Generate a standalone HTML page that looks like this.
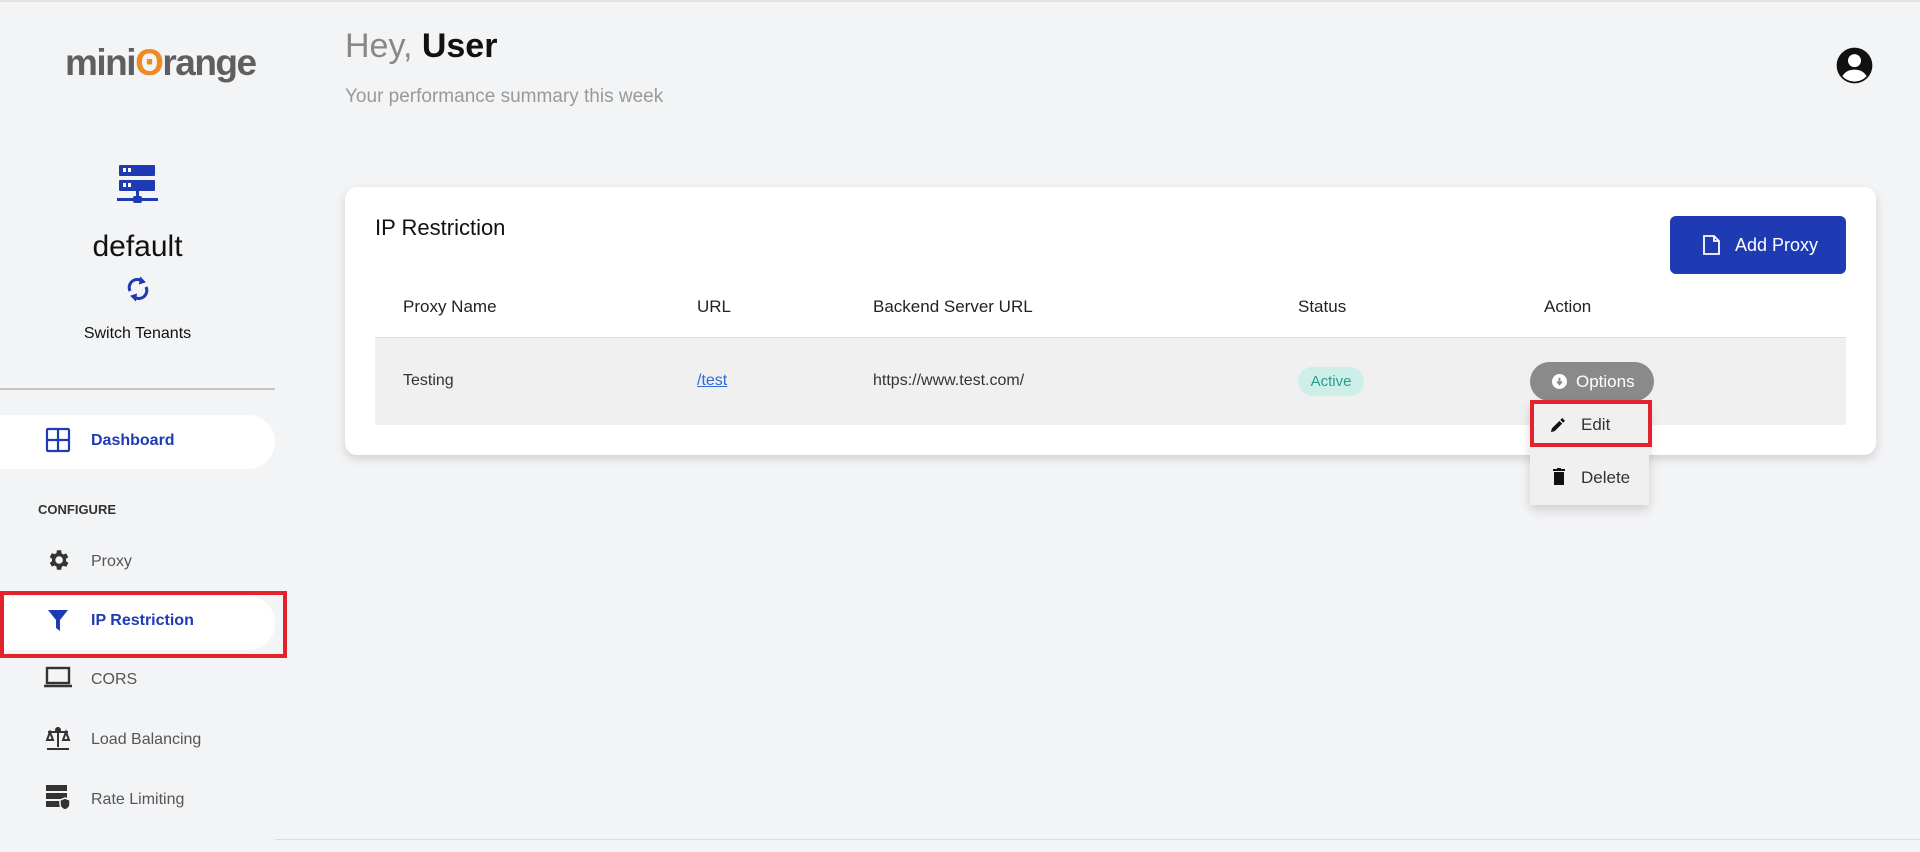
<!DOCTYPE html>
<html><head><meta charset="utf-8"><style>
*{box-sizing:border-box;margin:0;padding:0}
body{width:1920px;height:852px;background:#f3f4f6;font-family:"Liberation Sans",sans-serif;position:relative;overflow:hidden;border-top:2px solid #e2e2e2}
.abs{position:absolute}
.nav{position:absolute;left:45px;width:26px;height:26px}
.nt{position:absolute;left:91px;font-size:16px;color:#555}
.th{position:absolute;top:295px;font-size:17px;color:#222}
.td{position:absolute;top:370px;font-size:16px;color:#333}
</style></head><body>
<!-- logo -->
<div class="abs" style="left:65px;top:40px;font-size:37px;font-weight:bold;color:#5f5f5f;letter-spacing:-1.5px">mini<span style="color:#f08a24">ʘ</span>range</div>
<!-- server icon -->
<svg class="abs" style="left:117px;top:163px" width="42" height="42" viewBox="0 0 42 42"><rect x="2" y="0" width="36" height="11" rx="1" fill="#1f3bb3"/><rect x="2" y="15" width="36" height="11" rx="1" fill="#1f3bb3"/><rect x="6" y="3" width="3" height="4" fill="#fff"/><rect x="11" y="3" width="3" height="4" fill="#fff"/><rect x="6" y="18" width="3" height="4" fill="#fff"/><rect x="11" y="18" width="3" height="4" fill="#fff"/><rect x="19" y="26" width="3" height="8" fill="#1f3bb3"/><rect x="0" y="33" width="41" height="3" fill="#1f3bb3"/><rect x="16" y="31" width="9" height="7" rx="2" fill="#1f3bb3"/></svg>
<div class="abs" style="left:0;width:275px;text-align:center;top:228px;font-size:30px;color:#111">default</div>
<svg class="abs" style="left:126px;top:273px" width="24" height="28" viewBox="0 0 24 28" fill="none" stroke="#1f3bb3" stroke-width="3"><path d="M4 16A8 8 0 0 1 17 7"/><path d="M20 12A8 8 0 0 1 7 21"/><path d="M14 2l5 5-6 2" fill="#1f3bb3" stroke-width="1"/><path d="M10 26l-5-5 6-2" fill="#1f3bb3" stroke-width="1"/></svg>
<div class="abs" style="left:0;width:275px;text-align:center;top:323px;font-size:16px;color:#111">Switch Tenants</div>
<div class="abs" style="left:0;top:386px;width:275px;height:2px;background:#c4c4c4"></div>
<!-- dashboard -->
<div class="abs" style="left:0;top:413px;width:275px;height:54px;background:#fff;border-radius:0 27px 27px 0"></div>
<svg class="nav" style="top:425px" viewBox="0 0 26 26" fill="none" stroke="#1f3bb3" stroke-width="2.2"><rect x="2" y="2" width="22" height="22" rx="1"/><path d="M13 2v22M2 13h22"/></svg>
<div class="nt" style="top:430px;color:#1f3bb3;font-weight:bold">Dashboard</div>
<div class="abs" style="left:38px;top:500px;font-size:13px;font-weight:bold;color:#333">CONFIGURE</div>
<svg class="nav" style="top:545px" viewBox="0 0 24 24"><path fill="#333" d="M19.4 13a7.5 7.5 0 0 0 0-2l2.1-1.6-2-3.5-2.5 1a7 7 0 0 0-1.7-1L15 3h-4l-.4 2.7a7 7 0 0 0-1.7 1l-2.5-1-2 3.5L6.5 11a7.5 7.5 0 0 0 0 2l-2.1 1.6 2 3.5 2.5-1a7 7 0 0 0 1.7 1L11 21h4l.4-2.7a7 7 0 0 0 1.7-1l2.5 1 2-3.5zM13 15.5a3.5 3.5 0 1 1 0-7 3.5 3.5 0 0 1 0 7z"/></svg>
<div class="nt" style="top:551px">Proxy</div>
<div class="abs" style="left:0;top:594px;width:275px;height:54px;background:#fff;border-radius:0 27px 27px 0"></div>
<div class="abs" style="left:0;top:589px;width:287px;height:67px;border:4px solid #e3222b"></div>
<svg class="nav" style="top:605px" viewBox="0 0 26 26"><path fill="#1f3bb3" d="M3 3h20l-8 10v11l-4-3v-8z"/></svg>
<div class="nt" style="top:610px;color:#1f3bb3;font-weight:bold">IP Restriction</div>
<svg class="nav" style="left:44px;width:28px;top:663px" viewBox="0 0 28 26" fill="none" stroke="#333" stroke-width="2.4"><rect x="3" y="3" width="22" height="15"/><path d="M0 21h28"/></svg>
<div class="nt" style="top:669px">CORS</div>
<svg class="nav" style="top:723px" viewBox="0 0 26 26" fill="none" stroke="#333" stroke-width="2"><path d="M13 2v20M3 7h20M2 24h22M5 7l-3 8h6zM21 7l-3 8h6z"/><circle cx="13" cy="5" r="2"/></svg>
<div class="nt" style="top:729px">Load Balancing</div>
<svg class="nav" style="top:783px" viewBox="0 0 26 26"><rect x="1" y="0" width="21" height="6" fill="#333"/><rect x="1" y="8" width="21" height="6" fill="#333"/><rect x="1" y="16" width="14" height="6" fill="#333"/><path d="M20 13l5 2v4c0 3-2 5-5 6-3-1-5-3-5-6v-4z" fill="#333" stroke="#f3f4f6" stroke-width="1.5"/></svg>
<div class="nt" style="top:789px">Rate Limiting</div>
<div class="abs" style="left:275px;top:837px;width:1645px;height:1px;background:#ddd"></div>
<!-- header -->
<div class="abs" style="left:345px;top:25px;font-size:34px;color:#888">Hey, <b style="color:#111">User</b></div>
<div class="abs" style="left:345px;top:84px;font-size:19px;color:#999">Your performance summary this week</div>
<svg class="abs" style="left:1835px;top:44px" width="39" height="39" viewBox="0 0 24 24"><circle cx="12" cy="12" r="11" fill="#111"/><circle cx="12" cy="9" r="4" fill="#fff"/><path d="M4.5 18.5c2-3 4.5-4 7.5-4s5.5 1 7.5 4A10 10 0 0 1 4.5 18.5z" fill="#fff"/></svg>
<!-- card -->
<div class="abs" style="left:345px;top:185px;width:1531px;height:268px;background:#fff;border-radius:12px;box-shadow:0 4px 10px rgba(0,0,0,.15)"></div>
<div class="abs" style="left:375px;top:213px;font-size:22px;color:#111">IP Restriction</div>
<div class="abs" style="left:1670px;top:214px;width:176px;height:58px;background:#1f3bb3;border-radius:6px;color:#fff;font-size:18px;line-height:58px;padding-left:65px">Add Proxy</div>
<svg class="abs" style="left:1703px;top:233px" width="17" height="20" viewBox="0 0 17 20" fill="none" stroke="#fff" stroke-width="1.8"><path d="M1 1h10l5 5v13H1z M11 1v5h5"/></svg>
<div class="th" style="left:403px">Proxy Name</div>
<div class="th" style="left:697px">URL</div>
<div class="th" style="left:873px">Backend Server URL</div>
<div class="th" style="left:1298px">Status</div>
<div class="th" style="left:1544px">Action</div>
<div class="abs" style="left:375px;top:335px;width:1471px;height:88px;background:#f0f0f0;border-top:1px solid #ddd"></div>
<div class="td" style="left:403px">Testing</div>
<div class="td" style="left:697px;color:#2d6bd6;text-decoration:underline">/test</div>
<div class="td" style="left:873px">https://www.test.com/</div>
<div class="abs" style="left:1298px;top:365px;width:66px;height:29px;border-radius:15px;background:#cdeee9;color:#27a08c;font-size:15px;line-height:29px;text-align:center">Active</div>
<div class="abs" style="left:1530px;top:360px;width:124px;height:39px;border-radius:20px;background:#8a8a8a;color:#fff;font-size:17px;line-height:39px;padding-left:46px">Options</div>
<svg class="abs" style="left:1552px;top:372px" width="15" height="15" viewBox="0 0 16 16"><circle cx="8" cy="8" r="8" fill="#fff"/><path d="M8 4v5M5.5 8L8 11l2.5-3" stroke="#8a8a8a" stroke-width="2" fill="none"/></svg>
<div class="abs" style="left:1530px;top:399px;width:119px;height:104px;background:#f0f0f0;box-shadow:0 5px 10px rgba(0,0,0,.15)"></div>
<div class="abs" style="left:1530px;top:398px;width:122px;height:47px;border:4px solid #e3222b"></div>
<svg class="abs" style="left:1550px;top:416px" width="15" height="15" viewBox="0 0 16 16"><path d="M1 15l1-4 8-8 3 3-8 8zM11 2l2-2 3 3-2 2z" fill="#111"/></svg>
<div class="abs" style="left:1581px;top:413px;font-size:17px;color:#333">Edit</div>
<svg class="abs" style="left:1553px;top:466px" width="12" height="17" viewBox="0 0 12 17"><rect x="0" y="1" width="12" height="2" fill="#111"/><rect x="4" y="0" width="4" height="2" fill="#111"/><rect x="1" y="4" width="10" height="13" fill="#111"/></svg>
<div class="abs" style="left:1581px;top:466px;font-size:17px;color:#333">Delete</div>
</body></html>
